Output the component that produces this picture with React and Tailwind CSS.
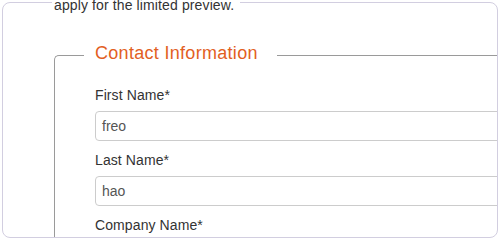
export default function App() {
  const fields = [
    { label: "First Name*", value: "freo" },
    { label: "Last Name*", value: "hao" },
    { label: "Company Name*", value: "" },
  ];
  return (
    <div className="w-[500px] h-[240px] overflow-hidden bg-white pt-[2px] px-[2px] font-['Liberation_Sans',Arial,sans-serif]">
      <div className="h-[236px] border border-[#d2cee0] rounded-[8px] flex flex-col">
        <div className="-mt-[8px] ml-[49px] pl-[2px] pr-[6px] h-[20px] leading-[20px] text-[14px] tracking-[0.12px] text-[#333] bg-white w-fit relative z-10">
          apply for the limited preview.
        </div>
        <div className="flex-1 min-h-0 overflow-hidden rounded-b-[7px]">
          <div className="mt-[40px] ml-[51px] w-[700px] border-l border-t border-[#9a9a9a] rounded-tl-[5px] pl-[40px]">
            <div className="-mt-[15px] -ml-[11px] pl-[11px] pr-[19px] w-fit bg-white text-[18px] leading-[24px] tracking-[0.3px] text-[#e2601f]">
              Contact Information
            </div>
            <div className="mt-[20px] flex flex-col">
              {fields.map((f) => (
                <div key={f.label} className="flex flex-col mb-[9px]">
                  <label className="text-[14px] leading-[20px] tracking-[0.1px] text-[#333] mb-[6px]">{f.label}</label>
                  <div className="w-[520px] h-[30px] border border-[#cccccc] rounded-[4px] px-[6px] flex items-center text-[14px] text-[#555]">
                    {f.value}
                  </div>
                </div>
              ))}
            </div>
          </div>
        </div>
      </div>
    </div>
  );
}
